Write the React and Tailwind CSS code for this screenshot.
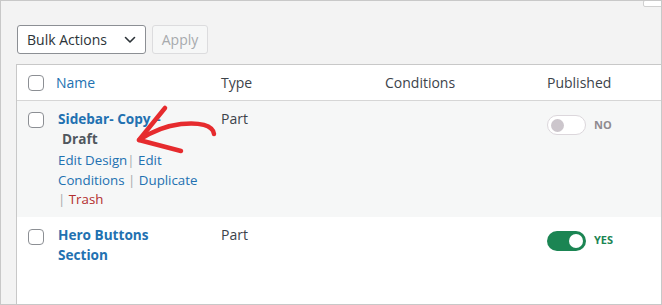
import React from "react";

const font = { fontFamily: '"Open Sans", "Noto Sans", sans-serif' };

function Checkbox() {
  return <div className="w-4 h-4 rounded-[4px] border border-[#8c8f94] bg-white" />;
}

function Toggle({ on }) {
  return (
    <div className="flex items-center gap-2">
      {on ? (
        <div className="w-[39px] h-[20px] rounded-full bg-[#1b8553] flex items-center justify-end pr-[3px]">
          <div className="w-[14px] h-[14px] rounded-full bg-white" />
        </div>
      ) : (
        <div className="w-[39px] h-[20px] rounded-full bg-white border border-[#dcd7dc] flex items-center pl-[3px]">
          <div className="w-[13px] h-[13px] rounded-full bg-[#ccc6cc]" />
        </div>
      )}
      <span className={`text-[11px] font-bold ${on ? "text-[#1b8553]" : "text-[#8f8a8f]"}`}>
        {on ? "YES" : "NO"}
      </span>
    </div>
  );
}

export default function App() {
  return (
    <div style={font} className="relative w-[662px] h-[305px] bg-[#f3f3f3] border border-[#c8c8c8] overflow-hidden">
      {/* top-right cut off box */}
      <div className="absolute -top-px right-[-4px] w-[22px] h-[7px] bg-white border border-[#d0d0d0] rounded-[2px]" />

      {/* Bulk actions */}
      <div className="flex items-center gap-[6px] ml-[16px] mt-[24px] h-[29px]">
        <div className="w-[129px] h-[29px] bg-white border border-[#8c8f94] rounded-[3px] flex items-center justify-between pl-[9px] pr-[9px]">
          <span className="text-[14px] text-[#2c3338]">Bulk Actions</span>
          <svg width="12" height="8" viewBox="0 0 12 8" fill="none">
            <path d="M1.5 1.5 L6 6 L10.5 1.5" stroke="#2c3338" strokeWidth="1.6" strokeLinecap="round" strokeLinejoin="round" />
          </svg>
        </div>
        <div className="w-[56px] h-[29px] bg-[#f6f7f7] border border-[#dcdcde] rounded-[3px] flex items-center justify-center">
          <span className="text-[14px] text-[#a7aaad]">Apply</span>
        </div>
      </div>

      {/* Table */}
      <div className="ml-[15px] mt-[10px] bg-white border-l border-t border-[#c8c8c8] h-[300px] text-[14px] text-[#3c434a]">
        {/* header */}
        <div className="grid grid-cols-[39px_165px_164px_162px_1fr] items-center h-[36px] border-b border-[#d6d6d6]">
          <div className="pl-[11px]"><Checkbox /></div>
          <div className="text-[#2271b1]">Name</div>
          <div>Type</div>
          <div>Conditions</div>
          <div>Published</div>
        </div>

        {/* row 1 */}
        <div className="grid grid-cols-[39px_165px_164px_162px_1fr] bg-[#f6f7f7] pt-[8px] pb-[7px]">
          <div className="pl-[11px] pt-[3px]"><Checkbox /></div>
          <div className="pl-[2px]">
            <div className="leading-[20px] font-bold text-[#2271b1] text-[13.6px]">Sidebar- Copy –</div>
            <div className="leading-[20px] font-bold text-[#50575e] text-[13.6px] pl-[4px]">Draft</div>
            <div className="pt-[2px] text-[13.3px] leading-[19.5px] text-[#2271b1]">
              <div>Edit Design<span className="text-[#a7aaad]">|</span> Edit</div>
              <div>Conditions <span className="text-[#a7aaad]">|</span> Duplicate</div>
              <div><span className="text-[#a7aaad]">|</span> <span className="text-[#b32d2e]">Trash</span></div>
            </div>
          </div>
          <div className="leading-[20px]">Part</div>
          <div />
          <div className="pt-[6px]"><Toggle on={false} /></div>
        </div>

        {/* row 2 */}
        <div className="grid grid-cols-[39px_165px_164px_162px_1fr] pt-[8px]">
          <div className="pl-[11px] pt-[4px]"><Checkbox /></div>
          <div className="pl-[2px] leading-[20px] font-bold text-[#2271b1] text-[13.6px]">
            <div>Hero Buttons</div>
            <div>Section</div>
          </div>
          <div className="leading-[20px]">Part</div>
          <div />
          <div className="pt-[6px]"><Toggle on /></div>
        </div>
      </div>

      {/* red annotation arrow */}
      <svg className="absolute left-0 top-0 pointer-events-none" width="662" height="305" viewBox="0 0 662 305" fill="none">
        <path
          d="M213 133 C212 124, 198 121, 180 123 C163 125, 150 131, 138 139"
          stroke="#e62b2e"
          strokeWidth="4.5"
          strokeLinecap="round"
          strokeLinejoin="round"
        />
        <path
          d="M164 107 L138 139 L180 150"
          stroke="#e62b2e"
          strokeWidth="4.5"
          strokeLinecap="round"
          strokeLinejoin="round"
        />
      </svg>
    </div>
  );
}
